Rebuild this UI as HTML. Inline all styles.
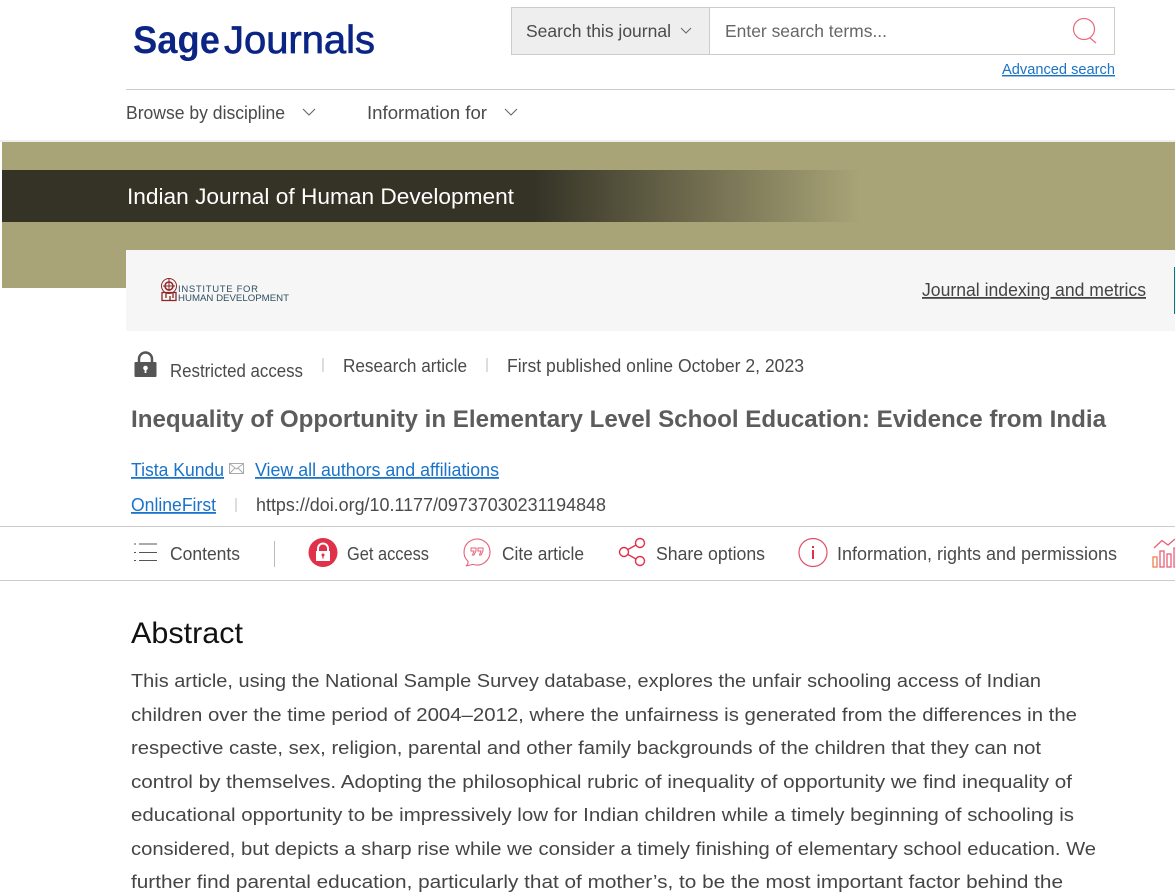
<!DOCTYPE html>
<html lang="en"><head><meta charset="utf-8"><title>Inequality of Opportunity in Elementary Level School Education</title>
<style>
html,body{margin:0;padding:0;background:#fff;width:1175px;height:896px;overflow:hidden}
svg{display:block}
text{font-family:"Liberation Sans",Arial,sans-serif;font-size:18px;fill:#4a4a4a}
.b text{font-size:18.500px;fill:#454545}
.l{fill:#1a73c8;text-decoration:underline}
</style></head><body>
<svg width="1175" height="896" viewBox="0 0 1175 896" xmlns="http://www.w3.org/2000/svg">
<defs><linearGradient id="g" x1="0" x2="1" y1="0" y2="0"><stop offset="0" stop-color="#353326"/><stop offset=".62" stop-color="#353326"/><stop offset="1" stop-color="#a9a477"/></linearGradient></defs>

<text x="133" y="53" textLength="87" lengthAdjust="spacingAndGlyphs" style="font-size:39px;font-weight:700;fill:#0b2585">Sage</text>
<text x="224" y="53" textLength="151" lengthAdjust="spacingAndGlyphs" style="font-size:39px;fill:#0b2585;stroke:#0b2585;stroke-width:.7px">Journals</text>

<rect x="511.500" y="7.500" width="603" height="47" fill="#fff" stroke="#ccc"/>
<rect x="512" y="8" width="197" height="46" fill="#eee"/>
<rect x="709" y="8" width="1" height="46" fill="#ccc"/>
<text x="526" y="37" textLength="145" lengthAdjust="spacingAndGlyphs" style="font-size:17.500px">Search this journal</text>
<path d="M681 28l5 5 5-5" fill="none" stroke="#666"/>
<text x="725" y="37" textLength="162" lengthAdjust="spacingAndGlyphs" style="font-size:17.500px;fill:#666">Enter search terms...</text>
<circle cx="1084" cy="29" r="10.500" fill="none" stroke="#ec6a80" stroke-width="1.200"/>
<path d="M1090 38l6 5" fill="none" stroke="#ec6a80" stroke-width="1.200"/>
<text x="1002" y="74" textLength="113" lengthAdjust="spacingAndGlyphs" class="l" style="font-size:14.500px">Advanced search</text>
<rect x="126" y="89" width="1049" height="1" fill="#ccc"/>

<text x="126" y="119" textLength="159" lengthAdjust="spacingAndGlyphs">Browse by discipline</text>
<path d="M303 109l6 6 6-6" fill="none" stroke="#666" stroke-width="1.100"/>
<text x="367" y="119" textLength="120" lengthAdjust="spacingAndGlyphs">Information for</text>
<path d="M505 109l6 6 6-6" fill="none" stroke="#666" stroke-width="1.100"/>

<rect x="0" y="140" width="1175" height="2" fill="#eee"/>
<rect x="2" y="142" width="1173" height="146" fill="#a9a477"/>
<rect x="2" y="170" width="858" height="52" fill="url(#g)"/>
<text x="127" y="204" textLength="387" lengthAdjust="spacingAndGlyphs" style="font-size:22.500px;fill:#fff">Indian Journal of Human Development</text>

<rect x="126" y="250" width="1049" height="81" fill="#f6f6f6"/>
<rect x="1174" y="267" width="1" height="47" fill="#007a78"/>
<g fill="none" stroke="#8e2525" stroke-width="1">
<circle cx="169" cy="286" r="7.500"/><circle cx="169" cy="286" r="4" stroke-width="1.500"/>
<path d="M169 279v12M163 286h12"/>
<path d="M162 292.500h14v8h-14zM166 293v5M170 296v4M173 293v5" stroke-width="1.300"/>
</g>
<text x="178" y="292" textLength="80" lengthAdjust="spacing" style="font-size:9.500px;fill:#2f4f5f">INSTITUTE FOR</text>
<text x="178" y="301" textLength="111" lengthAdjust="spacingAndGlyphs" style="font-size:9.500px;fill:#2f4f5f">HUMAN DEVELOPMENT</text>
<text x="922" y="296" textLength="224" lengthAdjust="spacingAndGlyphs" style="font-size:18px;fill:#444;text-decoration:underline">Journal indexing and metrics</text>

<path d="M139 364v-5a6.500 6.500 0 0 1 13 0v5" fill="none" stroke="#555" stroke-width="2.500"/>
<rect x="134.500" y="362" width="22" height="15" rx="1" fill="#555"/>
<circle cx="145.500" cy="368" r="2.300" fill="#fff"/><rect x="144.600" y="368" width="1.800" height="5" fill="#fff"/>
<text x="170" y="377" textLength="133" lengthAdjust="spacingAndGlyphs">Restricted access</text>
<rect x="322" y="358" width="2" height="14" fill="#ddd"/>
<text x="343" y="372" textLength="124" lengthAdjust="spacingAndGlyphs">Research article</text>
<rect x="486" y="358" width="2" height="14" fill="#ddd"/>
<text x="507" y="372" textLength="297" lengthAdjust="spacingAndGlyphs">First published online October 2, 2023</text>

<text x="131" y="427" textLength="975" lengthAdjust="spacingAndGlyphs" style="font-size:24.500px;font-weight:700;fill:#5c5c5c">Inequality of Opportunity in Elementary Level School Education: Evidence from India</text>

<text x="131" y="476" textLength="93" lengthAdjust="spacingAndGlyphs" class="l">Tista Kundu</text>
<rect x="229.500" y="463.500" width="14" height="10" fill="#fff" stroke="#aaa"/>
<path d="M230 464l6.500 5 6.500-5M230 473l5-5M243 473l-5-5" fill="none" stroke="#aaa"/>
<text x="255" y="476" textLength="244" lengthAdjust="spacingAndGlyphs" class="l">View all authors and affiliations</text>
<text x="131" y="511" textLength="85" lengthAdjust="spacingAndGlyphs" class="l">OnlineFirst</text>
<rect x="235" y="498" width="2" height="14" fill="#ddd"/>
<text x="256" y="511" textLength="350" lengthAdjust="spacingAndGlyphs">https://doi.org/10.1177/09737030231194848</text>

<rect x="0" y="526" width="1175" height="1" fill="#ccc"/>
<rect x="0" y="580" width="1175" height="1" fill="#ccc"/>
<g stroke="#555" stroke-width="1"><path d="M139 544h18M139 552.500h18M139 560.500h18"/><path d="M134 544h2M134 552.500h2M134 560.500h2"/></g>
<text x="170" y="560" textLength="70" lengthAdjust="spacingAndGlyphs">Contents</text>
<rect x="274" y="541" width="1" height="26" fill="#bbb"/>

<circle cx="323" cy="552.500" r="14.500" fill="#e0304a"/>
<path d="M318 552v-3.500a5 5 0 0 1 10 0v3.500" fill="none" stroke="#fff" stroke-width="2"/>
<rect x="316" y="551" width="14" height="10" fill="#fff"/><circle cx="323" cy="555" r="1.500" fill="#e0304a"/><rect x="322.400" y="555" width="1.200" height="3.500" fill="#e0304a"/>
<text x="347" y="560" textLength="82" lengthAdjust="spacingAndGlyphs">Get access</text>

<path d="M468 561.400A13 13 0 1 1 473 564.400L466 566Q468.500 564 468 561.400z" fill="none" stroke="#e7607a" stroke-width="1.100"/>
<path d="M471 548h5v3l-2 4h-1.500l1.500-4h-3zM478 548h5v3l-2 4h-1.500l1.500-4h-3z" fill="none" stroke="#e7607a" stroke-width="1"/>
<text x="502" y="560" textLength="82" lengthAdjust="spacingAndGlyphs">Cite article</text>

<g fill="none" stroke="#e0304a" stroke-width="1.400"><circle cx="640" cy="543" r="4.500"/><circle cx="640" cy="561" r="4.500"/><circle cx="624" cy="552" r="4.500"/><path d="M628 549.500l8-4.500M628 554.500l8 4.500"/></g>
<text x="656" y="560" textLength="109" lengthAdjust="spacingAndGlyphs">Share options</text>

<circle cx="813" cy="552.500" r="14" fill="none" stroke="#e0506a" stroke-width="1.200"/>
<rect x="812" y="550" width="2" height="9" fill="#e0304a"/><rect x="812" y="546" width="2" height="2" fill="#e0304a"/>
<text x="837" y="560" textLength="280" lengthAdjust="spacingAndGlyphs">Information, rights and permissions</text>

<g fill="none" stroke="#e8607a" stroke-width="1.300"><path d="M1154 548l8-7.500 6 4.500 7-6"/><rect x="1153" y="557" width="4" height="10" stroke="#ef7f50"/><rect x="1160" y="551" width="4" height="16"/><rect x="1167" y="554" width="4" height="13"/><rect x="1174" y="548" width="4" height="19"/></g>

<text x="131" y="643" textLength="112" lengthAdjust="spacingAndGlyphs" style="font-size:30px;fill:#111">Abstract</text>
<g class="b">
<text x="131" y="687" textLength="910" lengthAdjust="spacingAndGlyphs">This article, using the National Sample Survey database, explores the unfair schooling access of Indian</text>
<text x="131" y="721" textLength="946" lengthAdjust="spacingAndGlyphs">children over the time period of 2004–2012, where the unfairness is generated from the differences in the</text>
<text x="131" y="754" textLength="910" lengthAdjust="spacingAndGlyphs">respective caste, sex, religion, parental and other family backgrounds of the children that they can not</text>
<text x="131" y="788" textLength="941" lengthAdjust="spacingAndGlyphs">control by themselves. Adopting the philosophical rubric of inequality of opportunity we find inequality of</text>
<text x="131" y="821" textLength="943" lengthAdjust="spacingAndGlyphs">educational opportunity to be impressively low for Indian children while a timely beginning of schooling is</text>
<text x="131" y="855" textLength="965" lengthAdjust="spacingAndGlyphs">considered, but depicts a sharp rise while we consider a timely finishing of elementary school education. We</text>
<text x="131" y="888" textLength="932" lengthAdjust="spacingAndGlyphs">further find parental education, particularly that of mother’s, to be the most important factor behind the</text>
</g>
</svg>
</body></html>
